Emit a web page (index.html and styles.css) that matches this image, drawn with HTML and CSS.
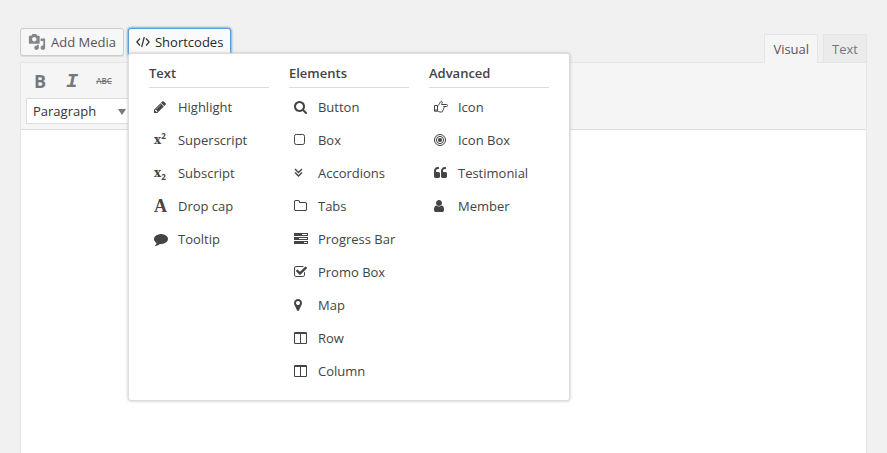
FILE: index.html
```html
<!DOCTYPE html>
<html lang="en">
<head>
<meta charset="utf-8">
<meta name="viewport" content="width=device-width, initial-scale=1">
<title>Post editor</title>
<link rel="stylesheet" href="styles.css">
</head>
<body>
<main class="page">
  <div class="topbar">
    <div class="media-buttons">
      <button type="button" class="btn">
        <svg class="media-icon" viewBox="0 0 20 20" aria-hidden="true"><path d="M13 11V4c0-.55-.45-1-1-1h-1.670L9 1H5L3.670 3H2c-.55 0-1 .45-1 1v7c0 .55.45 1 1 1h10c.55 0 1-.45 1-1zM7 4.500c1.380 0 2.500 1.120 2.500 2.500S8.380 9.500 7 9.500 4.500 8.380 4.500 7 5.620 4.500 7 4.500zM14 6h5v10.500c0 1.380-1.120 2.500-2.500 2.500S14 17.880 14 16.500s1.120-2.500 2.500-2.500c.17 0 .34.02.5.05V9h-3V6zm-4 8.050V13h2v3.500c0 1.380-1.120 2.500-2.500 2.500S7 17.880 7 16.500 8.120 14 9.500 14c.17 0 .34.02.5.05z"/></svg>
        Add Media
      </button>
      <div class="dropdown">
        <button type="button" class="btn btn-active" aria-expanded="true" aria-controls="shortcodes">
          <svg class="code-icon" viewBox="0 0 14 12" aria-hidden="true"><path d="M4 2.500L.8 6 4 9.500M10 2.500L13.200 6 10 9.500M8.300 1L5.700 11"/></svg>
          Shortcodes
        </button>
        <div class="menu" id="shortcodes">
          <section class="menu-col">
            <h2>Text</h2>
            <button type="button" class="item"><svg class="icon" viewBox="128 0 1792 1792" aria-hidden="true"><path d="M491 1536l91-91-235-235-91 91v107h128v128h107zm523-928q0-22-22-22-10 0-17 7l-542 542q-7 7-7 17 0 22 22 22 10 0 17-7l542-542q7-7 7-17zm-54-192l416 416-832 832h-416v-416zm683 96q0 53-37 90l-166 166-416-416 166-165q36-38 90-38 53 0 91 38l235 234q37 39 37 91z"/></svg>Highlight</button>
            <button type="button" class="item"><span class="icon glyph" aria-hidden="true">x<sup>2</sup></span>Superscript</button>
            <button type="button" class="item"><span class="icon glyph" aria-hidden="true">x<sub>2</sub></span>Subscript</button>
            <button type="button" class="item"><span class="icon glyph glyph-serif" aria-hidden="true">A</span>Drop cap</button>
            <button type="button" class="item"><svg class="icon" viewBox="0 0 1792 1792" aria-hidden="true"><path d="M1792 896q0 174-120 321.500t-326 233-450 85.500q-70 0-145-8-198 175-460 242-49 14-114 22-17 2-30.500-9t-17.500-29v-1q-3-4-.5-12t2-10 4.500-9.500l6-9 7-8.500 8-9q7-8 31-34.500t34.500-38 31-39.500 32.500-51 27-59 26-76q-157-89-247.500-220t-90.500-281q0-130 71-248.500t191-204.500 286-136.500 348-50.500q244 0 450 85.500t326 233 120 321.500z"/></svg>Tooltip</button>
          </section>
          <section class="menu-col">
            <h2>Elements</h2>
            <button type="button" class="item"><svg class="icon" viewBox="64 0 1792 1792" aria-hidden="true"><path d="M1216 832q0-185-131.500-316.500t-316.500-131.500-316.500 131.500-131.500 316.500 131.500 316.500 316.500 131.500 316.500-131.500 131.500-316.500zm512 832q0 52-38 90t-90 38q-54 0-90-38l-343-342q-179 124-399 124-143 0-273.500-55.500t-225-150-150-225-55.500-273.500 55.500-273.500 150-225 225-150 273.500-55.500 273.500 55.500 225 150 150 225 55.500 273.500q0 220-124 399l343 343q37 37 37 90z"/></svg>Button</button>
            <button type="button" class="item"><svg class="icon line" viewBox="0 0 14 14" aria-hidden="true"><rect x=".5" y="1.500" width="10" height="10" rx="1.800"/></svg>Box</button>
            <button type="button" class="item"><svg class="icon line chevrons" viewBox="0 0 14 14" aria-hidden="true"><path d="M1 3l3.500 3.500L8 3M1 6.500L4.500 10 8 6.500"/></svg>Accordions</button>
            <button type="button" class="item"><svg class="icon" viewBox="64 0 1792 1792" aria-hidden="true"><path d="M1600 1312v-704q0-40-28-68t-68-28h-704q-40 0-68-28t-28-68v-64q0-40-28-68t-68-28h-320q-40 0-68 28t-28 68v960q0 40 28 68t68 28h1216q40 0 68-28t28-68zm128-704v704q0 92-66 158t-158 66h-1216q-92 0-158-66t-66-158v-960q0-92 66-158t158-66h320q92 0 158 66t66 158v32h672q92 0 158 66t66 158z"/></svg>Tabs</button>
            <button type="button" class="item"><svg class="icon" viewBox="0 0 14 14" aria-hidden="true"><path fill-rule="evenodd" d="M0 1h14v3H0zM8 2v1h5V2zM0 5h14v3H0zM5 6v1h8V6zM0 9h14v3H0zM10 10v1h3v-1z"/></svg>Progress Bar</button>
            <button type="button" class="item"><svg class="icon" viewBox="64 0 1792 1792" aria-hidden="true"><path d="M1472 930v318q0 119-84.500 203.500t-203.500 84.500h-832q-119 0-203.500-84.500t-84.500-203.500v-832q0-119 84.500-203.500t203.500-84.500h832q63 0 117 25 15 7 18 23 3 17-9 29l-49 49q-10 10-23 10-3 0-9-2-23-6-45-6h-832q-66 0-113 47t-47 113v832q0 66 47 113t113 47h832q66 0 113-47t47-113v-254q0-13 9-22l64-64q10-10 23-10 6 0 12 3 20 8 20 29zm231-489l-814 814q-24 24-57 24t-57-24l-430-430q-24-24-24-57t24-57l110-110q24-24 57-24t57 24l263 263 647-647q24-24 57-24t57 24l110 110q24 24 24 57t-24 57z"/></svg>Promo Box</button>
            <button type="button" class="item"><svg class="icon" viewBox="384 0 1792 1792" aria-hidden="true"><path d="M1152 640q0-106-75-181t-181-75-181 75-75 181 75 181 181 75 181-75 75-181zm256 0q0 109-33 179l-364 774q-16 33-47.500 52t-67.500 19-67.500-19-46.500-52l-365-774q-33-70-33-179 0-212 150-362t362-150 362 150 150 362z"/></svg>Map</button>
            <button type="button" class="item"><svg class="icon" viewBox="64 0 1792 1792" aria-hidden="true"><path d="M224 1536h608v-1152h-640v1120q0 13 9.500 22.500t22.500 9.500zm1376-32v-1120h-640v1152h608q13 0 22.500-9.500t9.500-22.500zm128-1216v1216q0 66-47 113t-113 47h-1344q-66 0-113-47t-47-113v-1216q0-66 47-113t113-47h1344q66 0 113 47t47 113z"/></svg>Row</button>
            <button type="button" class="item"><svg class="icon" viewBox="64 0 1792 1792" aria-hidden="true"><path d="M224 1536h608v-1152h-640v1120q0 13 9.500 22.500t22.500 9.500zm1376-32v-1120h-640v1152h608q13 0 22.500-9.500t9.500-22.500zm128-1216v1216q0 66-47 113t-113 47h-1344q-66 0-113-47t-47-113v-1216q0-66 47-113t113-47h1344q66 0 113 47t47 113z"/></svg>Column</button>
          </section>
          <section class="menu-col">
            <h2>Advanced</h2>
            <button type="button" class="item"><svg class="icon line" viewBox="0 0 14 14" aria-hidden="true"><path d="M3.500 5.500C5 5.300 5.500 3.500 6.300 2.100 7 .8 8.500 1.200 8.200 2.600c-.1.700-.4 1.200-.7 1.900h5c1.400 0 1.400 2 0 2H9.500c1 .6.800 1.900-.2 2.100.6.800.3 1.800-.6 1.900.2 1-.3 1.500-1.200 1.500H6c-1 0-1.700-.8-2.500-.8"/><path d="M.5 5.500h3v5.700h-3z"/><path d="M1 10h2"/></svg>Icon</button>
            <button type="button" class="item"><svg class="icon line" viewBox="0 0 14 14" aria-hidden="true"><circle cx="6" cy="7" r="5.500"/><circle cx="6" cy="7" r="3.600"/><circle class="dot" cx="6" cy="7" r="2.100"/></svg>Icon Box</button>
            <button type="button" class="item"><svg class="icon" viewBox="64 0 1792 1792" aria-hidden="true"><path d="M832 960v384q0 80-56 136t-136 56h-384q-80 0-136-56t-56-136v-704q0-104 40.500-198.500t109.500-163.500 163.500-109.500 198.500-40.500h64q26 0 45 19t19 45v128q0 26-19 45t-45 19h-64q-106 0-181 75t-75 181v32q0 40 28 68t68 28h224q80 0 136 56t56 136z"/><path d="M1728 960v384q0 80-56 136t-136 56h-384q-80 0-136-56t-56-136v-704q0-104 40.500-198.500t109.500-163.500 163.500-109.500 198.500-40.500h64q26 0 45 19t19 45v128q0 26-19 45t-45 19h-64q-106 0-181 75t-75 181v32q0 40 28 68t68 28h224q80 0 136 56t56 136z"/></svg>Testimonial</button>
            <button type="button" class="item"><svg class="icon" viewBox="256 0 1792 1792" aria-hidden="true"><path d="M1536 1399q0 109-62.500 187t-150.500 78h-854q-88 0-150.500-78t-62.500-187q0-85 8.500-160.500t31.500-152 58.500-131 94-89 134.500-34.500q131 128 313 128t313-128q76 0 134.500 34.500t94 89 58.500 131 31.500 152 8.500 160.500zm-256-887q0 159-112.500 271.500t-271.500 112.500-271.500-112.500-112.500-271.500 112.500-271.500 271.500-112.500 271.500 112.500 112.500 271.500z"/></svg>Member</button>
          </section>
        </div>
      </div>
    </div>
    <div class="tabs">
      <button type="button" class="tab tab-active">Visual</button>
      <button type="button" class="tab">Text</button>
    </div>
  </div>
  <div class="editor">
    <div class="toolbar">
      <div class="tools">
        <button type="button" class="tool bold" aria-label="Bold">B</button>
        <button type="button" class="tool italic" aria-label="Italic">I</button>
        <button type="button" class="tool strike" aria-label="Strikethrough">ABC</button>
      </div>
      <div class="format">
        <select aria-label="Format"><option>Paragraph</option></select>
        <svg class="caret" viewBox="0 0 8 6" aria-hidden="true"><path d="M0 0h8L4 6z"/></svg>
      </div>
    </div>
    <div class="content" contenteditable="true" role="textbox" aria-label="Content"></div>
  </div>
</main>
</body>
</html>
```
FILE: styles.css
```css
* {
  box-sizing: border-box;
}

body {
  margin: 0;
  background: #f1f1f1;
  color: #444;
  font: 13px/18px "Open Sans", sans-serif;
}

button,
select {
  margin: 0;
  font: inherit;
  color: inherit;
}

.page {
  display: flex;
  flex-direction: column;
  min-height: 100vh;
  padding: 28px 20px 0;
}

.topbar {
  display: flex;
  justify-content: space-between;
  align-items: flex-start;
}

.media-buttons {
  display: flex;
  gap: 4px;
}

.btn {
  display: flex;
  align-items: center;
  gap: 5px;
  height: 28px;
  padding: 0 7px;
  border: 1px solid #ccc;
  border-radius: 3px;
  background: #f7f7f7;
  box-shadow: 0 1px 0 #ddd;
  color: #555;
  white-space: nowrap;
}

.btn-active {
  border-color: #5b9dd9;
  background: #fafafa;
  box-shadow: 0 0 3px #0073aa;
  color: #23282d;
}

.media-icon {
  width: 18px;
  height: 18px;
  fill: #82878c;
}

.code-icon {
  width: 14px;
  height: 12px;
  fill: none;
  stroke: #333;
  stroke-width: 1.2;
}

.dropdown {
  position: relative;
}

.menu {
  position: absolute;
  z-index: 2;
  top: 25px;
  left: 0;
  display: flex;
  gap: 20px;
  padding: 10px 20px 13px;
  border: 1px solid #ddd;
  border-radius: 3px;
  background: #fff;
  box-shadow: 0 0 3px #bbb;
}

.menu-col {
  width: 120px;
}

.menu-col h2 {
  margin: 0 0 2px;
  padding-bottom: 5px;
  border-bottom: 1px solid #ddd;
  font-size: 13px;
  line-height: 18px;
  font-weight: 600;
}

.item {
  display: flex;
  align-items: center;
  gap: 10px;
  width: 100%;
  height: 33px;
  padding: 0 5px;
  border: 0;
  background: none;
  white-space: nowrap;
}

.icon {
  flex: none;
  width: 14px;
  height: 14px;
  fill: #444;
}

.line {
  fill: none;
  stroke: #444;
}

.chevrons {
  stroke-width: 1.4;
}

.dot {
  fill: #444;
  stroke: none;
}

.glyph {
  font-family: "DejaVu Serif", serif;
  font-size: 12px;
  font-weight: 700;
  line-height: 14px;
  text-align: left;
}

.glyph sup,
.glyph sub {
  font-family: "Open Sans", sans-serif;
  font-size: 8px;
  line-height: 0;
}

.glyph-serif {
  font-family: "Liberation Serif", serif;
  font-size: 18px;
}

.tabs {
  display: flex;
  gap: 5px;
  margin-top: 6px;
}

.tab {
  height: 28px;
  padding: 0 8px;
  border: 1px solid #e5e5e5;
  border-bottom: 0;
  background: #ebebeb;
  color: #777;
  font-size: 13px;
}

.tab-active {
  position: relative;
  height: 29px;
  background: #f5f5f5;
  color: #555;
}

.editor {
  display: flex;
  flex: 1;
  flex-direction: column;
  margin-top: -1px;
  border: 1px solid #e5e5e5;
  border-bottom: 0;
  background: #fff;
}

.toolbar {
  display: flex;
  flex-direction: column;
  gap: 4px;
  padding: 5px;
  border-bottom: 1px solid #ddd;
  background: #f5f5f5;
}

.tools {
  display: flex;
  gap: 4px;
}

.tool {
  width: 28px;
  height: 26px;
  padding: 0;
  border: 0;
  background: none;
  color: #777;
  line-height: 26px;
}

.bold {
  font-size: 18px;
  font-weight: 700;
}

.italic {
  font-family: "Liberation Mono", monospace;
  font-size: 20px;
  font-style: italic;
  font-weight: 700;
  line-height: 28px;
}

.strike {
  font-size: 8px;
  font-weight: 600;
  text-decoration: line-through;
}

.format {
  position: relative;
  width: 110px;
}

.format select {
  display: block;
  width: 100%;
  height: 26px;
  padding: 0 6px;
  border: 1px solid #ddd;
  border-radius: 0;
  background: #fff;
  color: #333;
  appearance: none;
}

.caret {
  position: absolute;
  top: 11px;
  right: 10px;
  width: 8px;
  height: 6px;
  fill: #777;
  pointer-events: none;
}

.content {
  flex: 1;
  outline: 0;
}
```
